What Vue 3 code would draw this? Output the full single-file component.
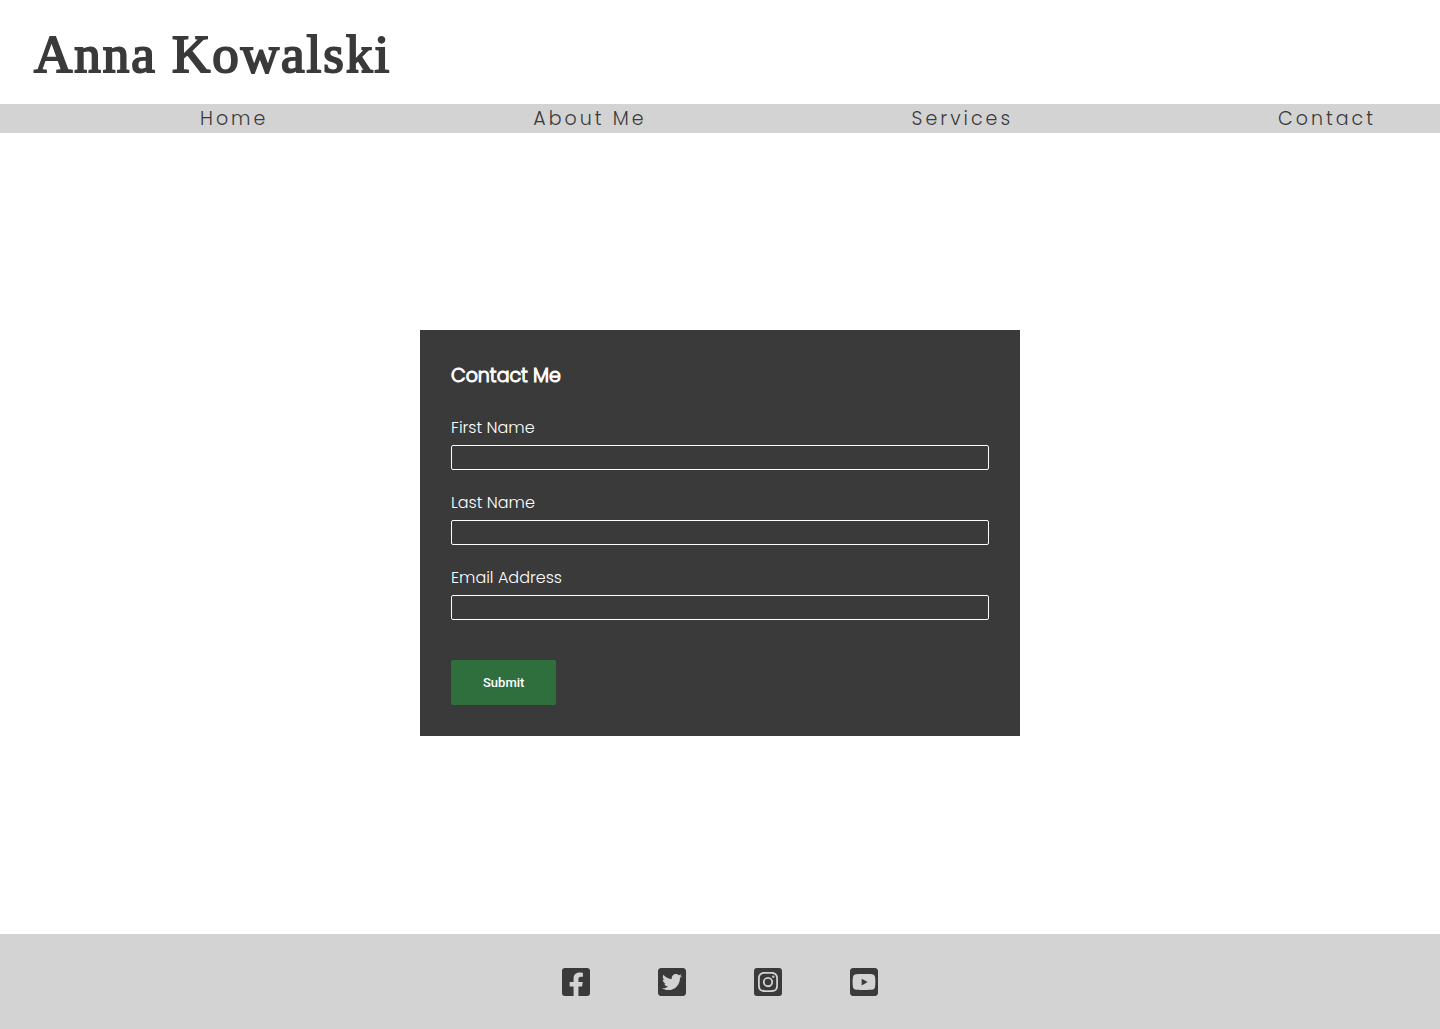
<script setup>
const links = ['Home', 'About Me', 'Services', 'Contact']

const fields = [
  { id: 'first-name', label: 'First Name', type: 'text' },
  { id: 'last-name', label: 'Last Name', type: 'text' },
  { id: 'email', label: 'Email Address', type: 'email' },
]

const socials = [
  {
    name: 'Facebook',
    path: 'M400 32H48A48 48 0 0 0 0 80v352a48 48 0 0 0 48 48h137.25V327.69h-63V256h63v-54.64c0-62.15 37-96.48 93.67-96.48 27.14 0 55.52 4.84 55.52 4.84v61h-31.27c-30.81 0-40.42 19.12-40.42 38.73V256h68.78l-11 71.69h-57.78V480H400a48 48 0 0 0 48-48V80a48 48 0 0 0-48-48z',
  },
  {
    name: 'Twitter',
    path: 'M400 32H48C21.5 32 0 53.5 0 80v352c0 26.5 21.5 48 48 48h352c26.5 0 48-21.5 48-48V80c0-26.5-21.5-48-48-48zm-48.9 158.8c.2 2.8.2 5.7.2 8.5 0 86.7-66 186.6-186.6 186.6-37.2 0-71.7-10.8-100.7-29.4 5.3.6 10.4.8 15.8.8 30.7 0 58.9-10.4 81.4-28-28.8-.6-53-19.5-61.3-45.5 10.1 1.5 19.2 1.5 29.6-1.2-30-6.1-52.5-32.5-52.5-64.4v-.8c8.7 4.9 18.9 7.9 29.6 8.3a65.447 65.447 0 0 1-29.2-54.6c0-12.2 3.2-23.4 8.9-33.1 32.3 39.8 80.8 65.8 135.2 68.6-9.3-44.5 24-80.6 64-80.6 18.9 0 35.9 7.9 47.9 20.7 14.8-2.8 29-8.3 41.6-15.8-4.9 15.2-15.2 28-28.8 36.1 13.2-1.4 26-5.1 37.8-10.2-8.9 13.1-20.1 24.7-32.9 34z',
  },
  {
    name: 'Instagram',
    path: 'M224,202.66A53.34,53.34,0,1,0,277.36,256,53.38,53.38,0,0,0,224,202.66Zm124.71-41a54,54,0,0,0-30.41-30.41c-21-8.29-71-6.43-94.3-6.43s-73.25-1.93-94.31,6.43a54,54,0,0,0-30.41,30.41c-8.28,21-6.43,71.05-6.43,94.33S91,329.26,99.32,350.33a54,54,0,0,0,30.41,30.41c21,8.29,71,6.43,94.31,6.43s73.24,1.93,94.3-6.43a54,54,0,0,0,30.41-30.41c8.35-21,6.43-71.05,6.43-94.33S357.1,182.74,348.75,161.67ZM224,338a82,82,0,1,1,82-82A81.9,81.9,0,0,1,224,338Zm85.38-148.3a19.14,19.14,0,1,1,19.13-19.14A19.1,19.1,0,0,1,309.42,189.74ZM400,32H48A48,48,0,0,0,0,80V432a48,48,0,0,0,48,48H400a48,48,0,0,0,48-48V80A48,48,0,0,0,400,32ZM382.88,322c-1.29,25.63-7.14,48.34-25.85,67s-41.4,24.63-67,25.85c-26.41,1.49-105.59,1.49-132,0-25.63-1.29-48.26-7.15-67-25.85s-24.63-41.42-25.85-67c-1.49-26.42-1.49-105.61,0-132,1.29-25.63,7.07-48.34,25.85-67s41.47-24.56,67-25.78c26.41-1.49,105.59-1.49,132,0,25.63,1.29,48.33,7.15,67,25.85s24.63,41.42,25.85,67.05C384.37,216.44,384.37,295.56,382.88,322Z',
  },
  {
    name: 'YouTube',
    path: 'M186.8 202.1l95.2 54.1-95.2 54.1V202.1zM448 80v352c0 26.5-21.5 48-48 48H48c-26.5 0-48-21.5-48-48V80c0-26.5 21.5-48 48-48h352c26.5 0 48 21.5 48 48zm-42 176.3s0-59.6-7.6-88.2c-4.2-15.8-16.5-28.2-32.2-32.4C337.9 128 224 128 224 128s-113.9 0-142.2 7.7c-15.7 4.2-28 16.6-32.2 32.4-7.6 28.5-7.6 88.2-7.6 88.2s0 59.6 7.6 88.2c4.2 15.8 16.5 27.7 32.2 31.9C110.1 384 224 384 224 384s113.9 0 142.2-7.7c15.7-4.2 28-16.1 32.2-31.9 7.6-28.5 7.6-88.1 7.6-88.1z',
  },
]
</script>

<template>
  <div class="page">
    <header class="header">
      <h1 class="name">Anna Kowalski</h1>
    </header>

    <nav class="nav">
      <a v-for="link in links" :key="link" class="nav-link" href="#">{{ link }}</a>
    </nav>

    <main class="main">
      <form class="card" @submit.prevent>
        <h2 class="card-title">Contact Me</h2>
        <div v-for="field in fields" :key="field.id" class="field">
          <label class="label" :for="field.id">{{ field.label }}</label>
          <input :id="field.id" class="input" :type="field.type" :name="field.id" />
        </div>
        <button class="submit" type="submit">Submit</button>
      </form>
    </main>

    <footer class="footer">
      <a v-for="s in socials" :key="s.name" class="social" href="#" :aria-label="s.name">
        <svg class="icon" viewBox="0 0 448 512" aria-hidden="true">
          <path :d="s.path" fill="currentColor" />
        </svg>
      </a>
    </footer>
  </div>
</template>

<style>
body {
  margin: 0;
  background: #fff;
}
</style>

<style scoped>
.page {
  display: flex;
  flex-direction: column;
  min-height: 100vh;
  color: #3a3a3a;
  font-family: Poppins, Inter, sans-serif;
  font-weight: 300;
}

.header {
  padding: 24px 34px 20px;
}

.name {
  margin: 0;
  font-family: "Liberation Serif", serif;
  font-size: 53px;
  font-weight: 400;
  line-height: 60px;
  letter-spacing: 2px;
  -webkit-text-stroke: 2px currentColor;
}

.nav {
  display: flex;
  justify-content: space-between;
  padding: 0 64px 0 200px;
  background: #d3d3d3;
}

.nav-link {
  color: inherit;
  font-size: 19px;
  line-height: 29px;
  letter-spacing: 3px;
  text-decoration: none;
}

.main {
  display: flex;
  flex: 1;
  align-items: center;
  justify-content: center;
  padding-bottom: 1px;
}

.card {
  box-sizing: border-box;
  width: 100%;
  max-width: 600px;
  padding: 31px;
  background: #3a3a3a;
  color: #fff;
}

.card-title {
  margin: 0 0 25px;
  font-size: 19px;
  font-weight: 300;
  line-height: 30px;
  -webkit-text-stroke: 1px currentColor;
}

.field {
  display: flex;
  flex-direction: column;
  gap: 5px;
  margin-bottom: 21px;
}

.label {
  font-size: 16px;
  line-height: 24px;
}

.input {
  box-sizing: border-box;
  width: 100%;
  height: 25px;
  padding: 0 4px;
  border: 1px solid #fff;
  border-radius: 2px;
  background: transparent;
  color: inherit;
  font: inherit;
}

.submit {
  display: block;
  margin-top: 40px;
  padding: 15px 32px;
  border: 0;
  border-radius: 2px;
  background: #2f6f3e;
  color: #fff;
  font-family: Roboto, "Liberation Sans", sans-serif;
  font-size: 13px;
  font-weight: 500;
  line-height: 15px;
}

.footer {
  display: flex;
  justify-content: center;
  gap: 68px;
  padding: 32px 0 31px;
  background: #d3d3d3;
}

.social {
  display: flex;
  color: inherit;
}

.icon {
  width: 28px;
  height: 32px;
}
</style>
